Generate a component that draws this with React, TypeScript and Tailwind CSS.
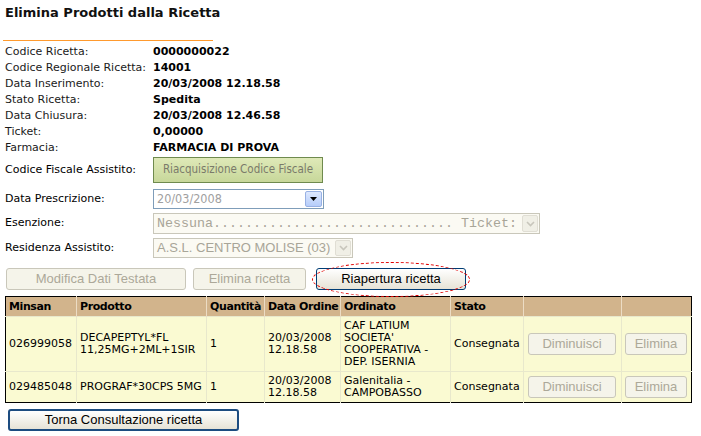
import React from 'react';

const verdana = { fontFamily: '"DejaVu Sans", Verdana, sans-serif' };

const info: [string, string][] = [
  ['Codice Ricetta:', '0000000022'],
  ['Codice Regionale Ricetta:', '14001'],
  ['Data Inserimento:', '20/03/2008 12.18.58'],
  ['Stato Ricetta:', 'Spedita'],
  ['Data Chiusura:', '20/03/2008 12.46.58'],
  ['Ticket:', '0,00000'],
  ['Farmacia:', 'FARMACIA DI PROVA'],
];

const rows = [
  {
    minsan: '026999058',
    prodotto: ['DECAPEPTYL*FL', '11,25MG+2ML+1SIR'],
    qta: '1',
    data: ['20/03/2008', '12.18.58'],
    ordinato: ['CAF LATIUM', "SOCIETA'", 'COOPERATIVA -', 'DEP. ISERNIA'],
    stato: 'Consegnata',
  },
  {
    minsan: '029485048',
    prodotto: ['PROGRAF*30CPS 5MG'],
    qta: '1',
    data: ['20/03/2008', '12.18.58'],
    ordinato: ['Galenitalia -', 'CAMPOBASSO'],
    stato: 'Consegnata',
  },
];

const Chevron = () => (
  <svg width="9" height="6" viewBox="0 0 9 6">
    <path d="M1 1 L4.5 4.5 L8 1" fill="none" stroke="#c8c6bc" strokeWidth="1.6" />
  </svg>
);

const DisabledBtn = ({ label, className = '' }: { label: string; className?: string }) => (
  <button
    disabled
    className={`h-[22px] rounded-[3px] border border-[#c9c7ba] bg-[#f5f4ea] text-[13px] text-[#aca899] ${className}`}
    style={{ fontFamily: '"Liberation Sans", Arial, sans-serif' }}
  >
    {label}
  </button>
);

export default function App() {
  return (
    <div className="w-[701px] h-[436px] bg-white text-[11px] text-black overflow-hidden" style={verdana}>
      <div className="pl-[5px] pt-[4px] h-[21px] leading-[17px] text-[13px] font-bold text-[#111]">
        Elimina Prodotti dalla Ricetta
      </div>
      <div className="ml-[3px] mt-[19px] w-[210px] h-[1px] bg-[#ff9a2e]" />

      <div className="pl-[5px] mt-[3px]">
        {info.map(([l, v]) => (
          <div key={l} className="flex h-[16px] leading-[16px]">
            <div className="w-[148px] text-[#1a1a1a]">{l}</div>
            <div className="font-bold">{v}</div>
          </div>
        ))}

        <div className="flex items-center mt-[1px] h-[26px]">
          <div className="w-[148px]">Codice Fiscale Assistito:</div>
          <div
            className="w-[170px] h-[26px] flex items-center justify-center border border-[#6f8a4e] bg-gradient-to-b from-[#dfe9b8] to-[#c7d79a] text-[11.5px] text-[#7a7a6a]"
            style={{ fontFamily: '"DejaVu Sans Condensed", "Liberation Sans", sans-serif' }}
          >
            Riacquisizione Codice Fiscale
          </div>
        </div>

        <div className="flex items-center mt-[6px] h-[20px]">
          <div className="w-[148px]">Data Prescrizione:</div>
          <div
            className="w-[171px] h-[20px] flex items-center border border-[#7f9db9] bg-white text-[12.5px] text-[#a0a0a0]"
            style={{ fontFamily: '"DejaVu Sans Condensed", "Liberation Sans", sans-serif' }}
          >
            <span className="flex-1 pl-[3px]">20/03/2008</span>
            <span className="w-[17px] h-[16px] mr-[1px] flex items-center justify-center border border-[#98b1e4] bg-gradient-to-b from-[#dde8fe] to-[#b6cdfa] rounded-[2px]">
              <svg width="7" height="4" viewBox="0 0 7 4">
                <path d="M0 0 H7 L3.5 4 Z" fill="#000" />
              </svg>
            </span>
          </div>
        </div>

        <div className="flex items-center mt-[4px] h-[21px]">
          <div className="w-[148px]">Esenzione:</div>
          <div
            className="w-[387px] h-[21px] flex items-center border border-[#c9c7ba] bg-[#fbfaf3] text-[13.33px] text-[#a8a598]"
            style={{ fontFamily: '"Liberation Mono", "Courier New", monospace' }}
          >
            <span className="flex-1 pl-[3px] whitespace-pre overflow-hidden">Nessuna.............................. Ticket:</span>
            <span className="w-[16px] h-[17px] mr-[1px] flex items-center justify-center border border-[#e0ded4] bg-[#f0efe6] rounded-[2px]">
              <Chevron />
            </span>
          </div>
        </div>

        <div className="flex items-center mt-[4px] h-[20px]">
          <div className="w-[148px]">Residenza Assistito:</div>
          <div
            className="w-[200px] h-[20px] flex items-center border border-[#c9c7ba] bg-[#fbfaf3] text-[13px] text-[#a8a598]"
            style={{ fontFamily: '"Liberation Sans", Arial, sans-serif' }}
          >
            <span className="flex-1 pl-[3px] whitespace-nowrap">A.S.L. CENTRO MOLISE (03)</span>
            <span className="w-[16px] h-[16px] mr-[1px] flex items-center justify-center border border-[#e0ded4] bg-[#f0efe6] rounded-[2px]">
              <Chevron />
            </span>
          </div>
        </div>

        <div className="flex items-center mt-[10px] h-[22px] pl-[1px]">
          <DisabledBtn label="Modifica Dati Testata" className="w-[180px]" />
          <DisabledBtn label="Elimina ricetta" className="w-[113px] ml-[7px]" />
          <div className="relative ml-[10px]">
            <button
              className="w-[150px] h-[22px] rounded-[3px] border border-[#003c74] bg-gradient-to-b from-white to-[#e6e3d6] text-[13px] text-black"
              style={{ fontFamily: '"Liberation Sans", Arial, sans-serif' }}
            >
              Riapertura ricetta
            </button>
            <span className="absolute left-[-4px] top-[-6px] w-[158px] h-[35px] rounded-[50%] border border-dashed border-[#e00000] pointer-events-none" />
          </div>
        </div>
      </div>

      <table className="ml-[5px] mt-[6px] border-collapse border border-black bg-[#fafad2] table-fixed w-[687px]">
        <colgroup>
          <col className="w-[71px]" />
          <col className="w-[130px]" />
          <col className="w-[58px]" />
          <col className="w-[76px]" />
          <col className="w-[110px]" />
          <col className="w-[73px]" />
          <col className="w-[98px]" />
          <col className="w-[70px]" />
        </colgroup>
        <thead>
          <tr className="bg-[#d2b48c] h-[20px]">
            {['Minsan', 'Prodotto', 'Quantità', 'Data Ordine', 'Ordinato', 'Stato', '', ''].map((h, i) => (
              <th
                key={i}
                className="border-l border-[#ecdcc4] first:border-l-0 px-[3px] text-left font-bold text-[11px] leading-[13px] tracking-[-0.4px] whitespace-nowrap"
              >
                {h}
              </th>
            ))}
          </tr>
        </thead>
        <tbody>
          {rows.map((r) => (
            <tr key={r.minsan} className="border-t border-[#e8e8cc]">
              <td className="px-[3px] border-l-0 border-[#e8e8cc]">{r.minsan}</td>
              <td className="px-[3px] border-l border-[#e8e8cc] leading-[12px]">
                {r.prodotto.map((p) => (
                  <div key={p}>{p}</div>
                ))}
              </td>
              <td className="px-[3px] border-l border-[#e8e8cc]">{r.qta}</td>
              <td className="px-[3px] border-l border-[#e8e8cc] leading-[12px]">
                {r.data.map((p) => (
                  <div key={p}>{p}</div>
                ))}
              </td>
              <td className="px-[3px] py-[3px] border-l border-[#e8e8cc] leading-[12px]">
                {r.ordinato.map((p) => (
                  <div key={p}>{p}</div>
                ))}
              </td>
              <td className="px-[3px] border-l border-[#e8e8cc]">{r.stato}</td>
              <td className="border-l border-[#e8e8cc] pl-[4px]">
                <DisabledBtn label="Diminuisci" className="w-[88px]" />
              </td>
              <td className="border-l border-[#e8e8cc] pl-[3px]">
                <DisabledBtn label="Elimina" className="w-[62px]" />
              </td>
            </tr>
          ))}
        </tbody>
      </table>

      <div className="ml-[8px] mt-[6px]">
        <button
          className="w-[231px] h-[22px] rounded-[3px] border-2 border-[#1c4c80] bg-gradient-to-b from-white to-[#e6e3d6] text-[13px] leading-[16px] text-black"
          style={{ fontFamily: '"Liberation Sans", Arial, sans-serif' }}
        >
          Torna Consultazione ricetta
        </button>
      </div>
    </div>
  );
}
